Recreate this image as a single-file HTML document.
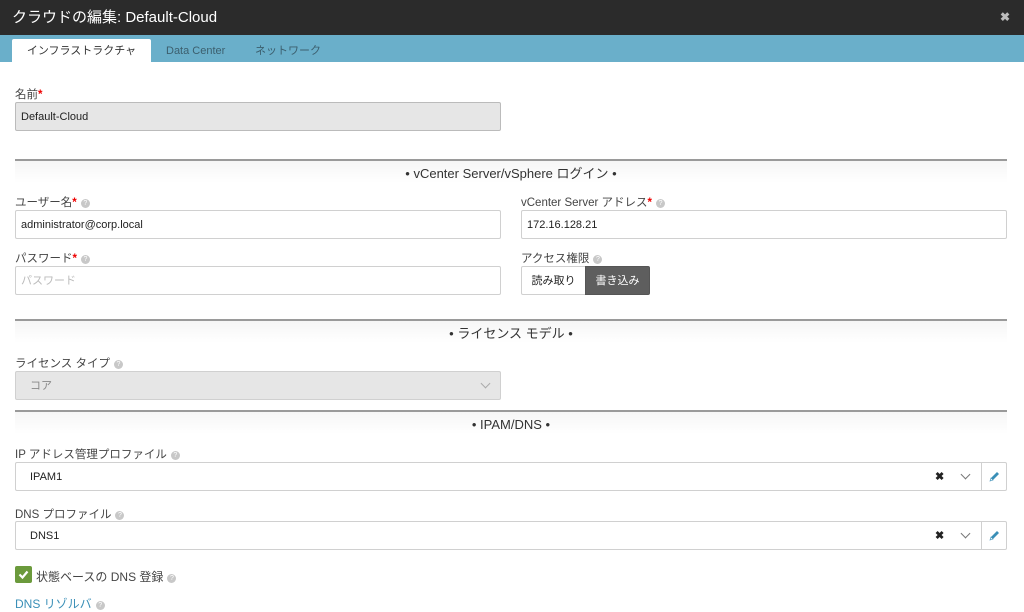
<!DOCTYPE html>
<html><head><meta charset="utf-8"><style>
*{box-sizing:border-box;margin:0;padding:0}
body{width:1024px;height:609px;overflow:hidden;background:#fff;font-family:"Liberation Sans","Noto Sans CJK JP",sans-serif;color:#333;position:relative}
.a{position:absolute}
.hdr{left:0;top:0;width:1024px;height:35px;background:#2b2b2b;color:#fff;font-size:15px;line-height:36px;padding-left:12px}
.x{right:14px;top:0;color:#bbb;font-size:12px;line-height:35px;font-weight:bold}
.tabs{left:0;top:35px;width:1024px;height:27px;background:#6aafca}
.tab{top:39px;height:23px;line-height:25px;font-size:11px;color:#3c5f6e}
.lbl{font-size:11.5px;color:#444}
.req{color:#e00;font-weight:bold}
.q{display:inline-block;width:9px;height:9px;border-radius:50%;background:#c8c8c8;color:#fff;font-size:7px;line-height:9px;text-align:center;margin-left:4px;vertical-align:1px}
.in{height:29px;border:1px solid #d0d0d0;border-radius:2px;font-size:11px;line-height:28px;padding-left:5px;color:#222}
.sec{left:15px;width:992px;height:24px;border-top:2px solid #9a9a9a;background:linear-gradient(#f6f6f6,#fff);text-align:center;font-size:13px;color:#333;line-height:26px}
.chev{width:7px;height:7px;border-right:1px solid #777;border-bottom:1px solid #777;transform:rotate(45deg)}
</style></head><body>
<div class="a hdr">クラウドの編集: Default-Cloud</div>
<div class="a x">✖</div>
<div class="a tabs"></div>
<div class="a tab" style="left:12px;width:139px;background:#fff;color:#333;text-align:center;border-radius:2px 2px 0 0">インフラストラクチャ</div>
<div class="a tab" style="left:166px">Data Center</div>
<div class="a tab" style="left:255px">ネットワーク</div>

<div class="a lbl" style="left:15px;top:86px">名前<span class="req">*</span></div>
<div class="a in" style="left:15px;top:102px;width:486px;background:#e6e6e6;border-color:#bbb">Default-Cloud</div>

<div class="a sec" style="top:159px">• vCenter Server/vSphere ログイン •</div>

<div class="a lbl" style="left:15px;top:194px">ユーザー名<span class="req">*</span><span class="q">?</span></div>
<div class="a in" style="left:15px;top:210px;width:486px">administrator@corp.local</div>
<div class="a lbl" style="left:521px;top:194px">vCenter Server アドレス<span class="req">*</span><span class="q">?</span></div>
<div class="a in" style="left:521px;top:210px;width:486px">172.16.128.21</div>

<div class="a lbl" style="left:15px;top:250px">パスワード<span class="req">*</span><span class="q">?</span></div>
<div class="a in" style="left:15px;top:266px;width:486px;color:#bbb">パスワード</div>
<div class="a lbl" style="left:521px;top:250px">アクセス権限<span class="q">?</span></div>
<div class="a in" style="left:521px;top:266px;width:65px;padding:0;text-align:center;border-radius:2px 0 0 2px">読み取り</div>
<div class="a in" style="left:585px;top:266px;width:65px;padding:0;text-align:center;background:#5e5e5e;border-color:#555;color:#fff;border-radius:0 2px 2px 0">書き込み</div>

<div class="a sec" style="top:319px">• ライセンス モデル •</div>

<div class="a lbl" style="left:15px;top:355px">ライセンス タイプ<span class="q">?</span></div>
<div class="a in" style="left:15px;top:371px;width:486px;background:#e6e6e6;color:#888;padding-left:14px">コア</div>
<div class="a chev" style="left:482px;top:380px;border-color:#aaa"></div>

<div class="a sec" style="top:410px">• IPAM/DNS •</div>

<div class="a lbl" style="left:15px;top:446px">IP アドレス管理プロファイル<span class="q">?</span></div>
<div class="a in" style="left:15px;top:462px;width:992px;padding-left:14px">IPAM1</div>
<div class="a" style="left:935px;top:470px;font-size:11px;font-weight:bold;color:#222">✖</div>
<div class="a chev" style="left:962px;top:471px"></div>
<div class="a" style="left:981px;top:463px;width:1px;height:27px;background:#d0d0d0"></div>
<svg class="a" style="left:988px;top:470px" width="13" height="13" viewBox="0 0 13 13"><path d="M2 11l1-3 6-6 2 2-6 6z" fill="#3a8fb7"/><path d="M2 11l1-3 2 2z" fill="#fff" stroke="#3a8fb7" stroke-width=".6"/></svg>

<div class="a lbl" style="left:15px;top:506px">DNS プロファイル<span class="q">?</span></div>
<div class="a in" style="left:15px;top:521px;width:992px;padding-left:14px">DNS1</div>
<div class="a" style="left:935px;top:529px;font-size:11px;font-weight:bold;color:#222">✖</div>
<div class="a chev" style="left:962px;top:530px"></div>
<div class="a" style="left:981px;top:522px;width:1px;height:27px;background:#d0d0d0"></div>
<svg class="a" style="left:988px;top:529px" width="13" height="13" viewBox="0 0 13 13"><path d="M2 11l1-3 6-6 2 2-6 6z" fill="#3a8fb7"/><path d="M2 11l1-3 2 2z" fill="#fff" stroke="#3a8fb7" stroke-width=".6"/></svg>

<div class="a" style="left:15px;top:566px;width:17px;height:17px;background:#6b9a3c;border-radius:2px"></div>
<svg class="a" style="left:15px;top:566px" width="17" height="17"><path d="M4.5 8.5l3 3 5-6" stroke="#fff" stroke-width="2.2" fill="none"/></svg>
<div class="a lbl" style="left:36px;top:568px;font-size:12px">状態ベースの DNS 登録<span class="q">?</span></div>
<div class="a" style="left:15px;top:595px;font-size:12px;color:#3a8fb7">DNS リゾルバ<span class="q">?</span></div>
</body></html>
